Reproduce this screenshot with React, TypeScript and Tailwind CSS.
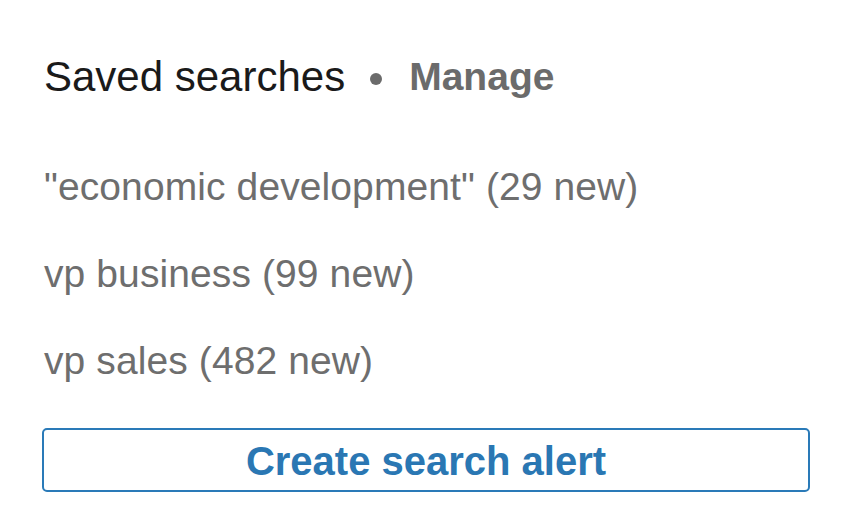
export default function App() {
  return (
    <div className="w-[850px] h-[522px] bg-white" style={{ fontFamily: '"Liberation Sans", Arial, sans-serif' }}>
      <div className="pt-[53px] pl-[44px] pr-[40px]">
        <div className="flex items-center h-[48px] leading-[48px]">
          <span className="text-[42px] text-[#1a1a1a]">Saved searches</span>
          <span className="ml-[25px] mr-[27px] w-[12px] h-[12px] rounded-full bg-[#6b6b6b] mt-[4px]" />
          <span className="text-[39px] font-bold text-[#6b6b6b]">Manage</span>
        </div>
        <div className="mt-[42px] flex flex-col text-[39px] tracking-[0.1px] leading-[87px] text-[#6e6e6e]">
          <div>"economic development" (29 new)</div>
          <div>vp business (99 new)</div>
          <div>vp sales (482 new)</div>
        </div>
        <button className="mt-[24px] ml-[-2px] w-[768px] h-[64px] border-2 border-[#2a7ab8] rounded-[5px] flex items-center justify-center text-[40px] font-bold text-[#2a77b3] leading-none pt-[2px]">
          Create search alert
        </button>
      </div>
    </div>
  );
}
